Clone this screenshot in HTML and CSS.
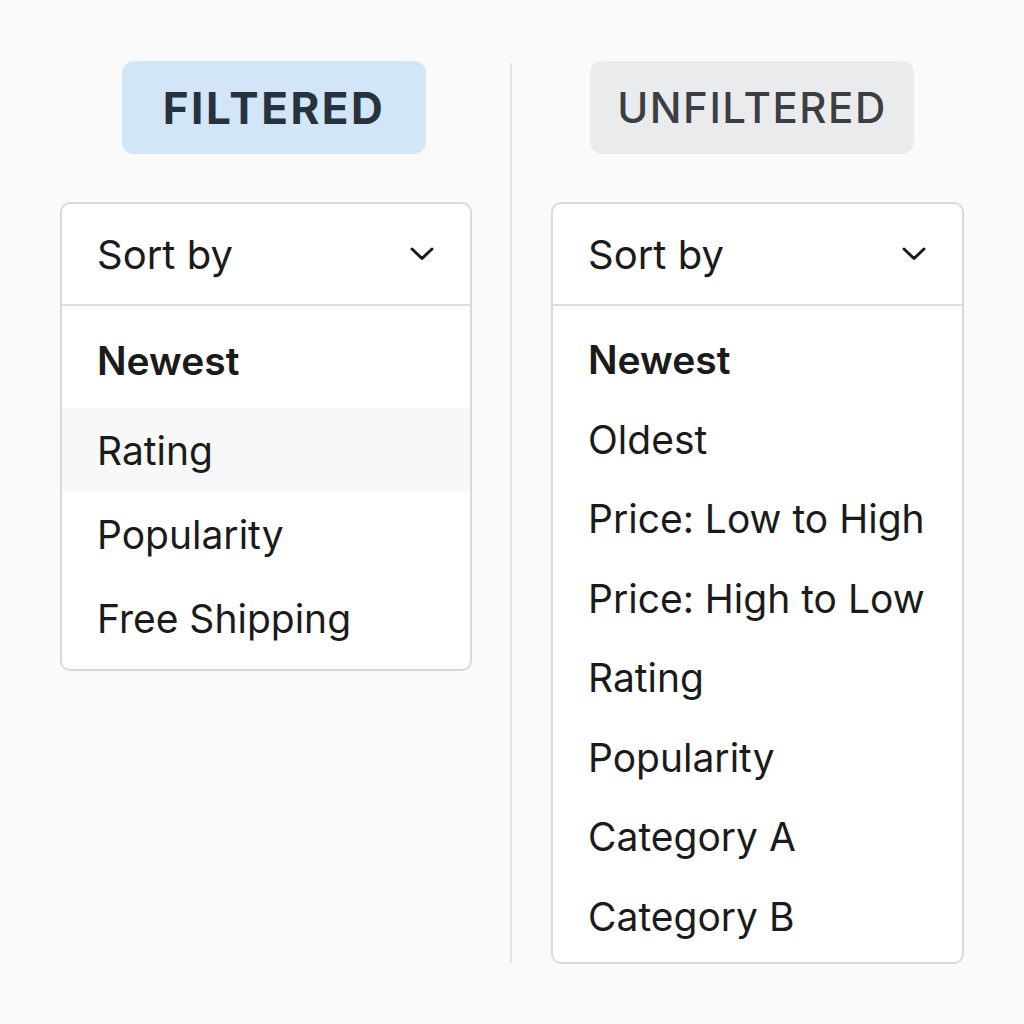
FILE: index.html
```html
<!DOCTYPE html>
<html lang="en">

<head>
    <meta charset="UTF-8">
    <meta name="viewport" content="width=device-width, initial-scale=1.0">
    <title>Sort by - Filtered vs Unfiltered</title>
    <link rel="stylesheet" href="styles.css">
</head>

<body>
    <div class="compare">
        <div class="column column-left">
            <div class="badge badge-filtered">FILTERED</div>
            <div class="dropdown">
                <div class="dropdown-header">
                    <span>Sort by</span>
                    <svg class="chevron" width="24" height="14" viewBox="0 0 24 14">
                        <path d="M2 2 L12 11.5 L22 2" fill="none" stroke="#1b1b1b" stroke-width="3" stroke-linecap="round" stroke-linejoin="round"/>
                    </svg>
                </div>
                <ul class="options options-filtered">
                    <li class="selected">Newest</li>
                    <li class="hover">Rating</li>
                    <li>Popularity</li>
                    <li>Free Shipping</li>
                </ul>
            </div>
        </div>

        <div class="divider"></div>

        <div class="column column-right">
            <div class="badge badge-unfiltered">UNFILTERED</div>
            <div class="dropdown">
                <div class="dropdown-header">
                    <span>Sort by</span>
                    <svg class="chevron" width="24" height="14" viewBox="0 0 24 14">
                        <path d="M2 2 L12 11.5 L22 2" fill="none" stroke="#1b1b1b" stroke-width="3" stroke-linecap="round" stroke-linejoin="round"/>
                    </svg>
                </div>
                <ul class="options options-all">
                    <li class="selected">Newest</li>
                    <li>Oldest</li>
                    <li>Price: Low to High</li>
                    <li>Price: High to Low</li>
                    <li>Rating</li>
                    <li>Popularity</li>
                    <li>Category A</li>
                    <li>Category B</li>
                </ul>
            </div>
        </div>
    </div>
</body>

</html>
```

FILE: styles.css
```css
body {
    background-color: #fafafa;
    margin: 0;
    padding: 0;
    font-family: Inter, "Noto Sans", Arial, sans-serif;
    color: #1b1b1b;
}

.compare {
    display: flex;
    padding-top: 61px;
    height: 1024px;
    box-sizing: border-box;
}

.column {
    display: flex;
    flex-direction: column;
}

.column-left {
    width: 412px;
    margin-left: 60px;
}

.column-right {
    width: 413px;
    margin-left: 39px;
}

.divider {
    width: 2px;
    height: 900px;
    margin-top: 2px;
    margin-left: 38px;
    background-color: #e4e4e4;
}

.badge {
    height: 93px;
    display: flex;
    align-items: center;
    justify-content: center;
    border-radius: 12px;
    box-sizing: border-box;
}

.badge-filtered {
    width: 304px;
    margin-left: 62px;
    background-color: #d2e6f8;
    color: #26323e;
    font-size: 44px;
    font-weight: 700;
    letter-spacing: 2.5px;
}

.badge-unfiltered {
    width: 324px;
    margin-left: 39px;
    background-color: #eaebed;
    color: #3b3e43;
    font-size: 42px;
    font-weight: 500;
    letter-spacing: 1.5px;
}

.dropdown {
    margin-top: 48px;
    width: 100%;
    background-color: #fff;
    border: 2px solid #d9d9d9;
    border-radius: 10px;
    box-sizing: border-box;
    overflow: hidden;
}

.dropdown-header {
    height: 100px;
    display: flex;
    align-items: center;
    justify-content: space-between;
    padding: 0 36px 0 35px;
    border-bottom: 2px solid #dedede;
    font-size: 40px;
}

.chevron {
    display: block;
}

.options {
    list-style: none;
    margin: 0;
    padding: 14px 0 0 0;
}

.options li {
    display: flex;
    align-items: center;
    padding-left: 35px;
    font-size: 39px;
}

.options .selected {
    font-weight: 600;
}

.options-filtered li {
    height: 84px;
}

.options-filtered .selected {
    height: 80px;
    margin-bottom: 8px;
}

.options-filtered .hover {
    background-color: #f8f8f8;
}

.options-filtered li:last-child {
    height: 84px;
    margin-bottom: 9px;
}

.options-all li {
    height: 79.5px;
}

.options-all li:last-child {
    margin-bottom: 6px;
}
```
